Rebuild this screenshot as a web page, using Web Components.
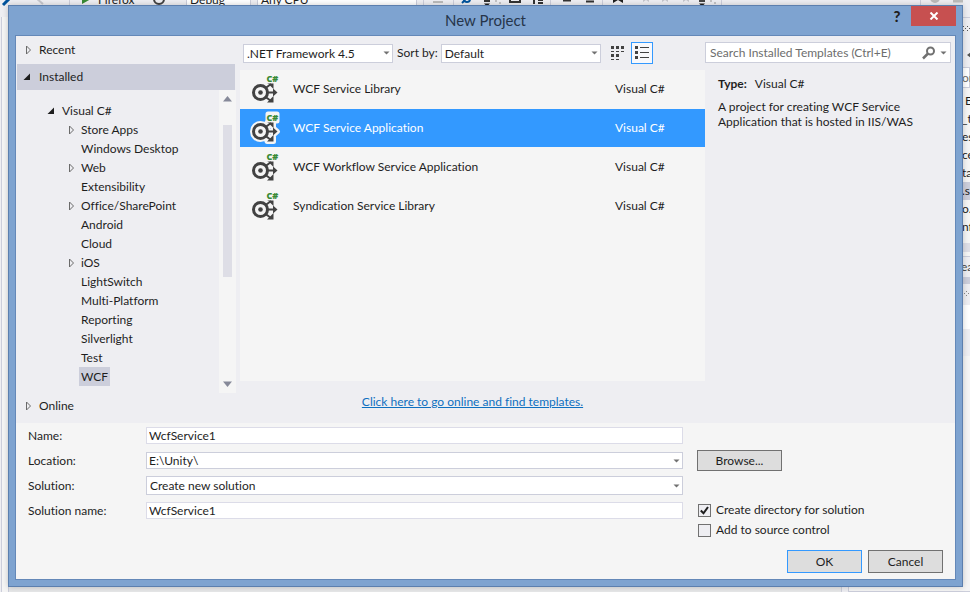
<!DOCTYPE html>
<html lang="en">
<head>
<meta charset="utf-8">
<title>New Project</title>
<style>
  html, body { height: 100%; margin: 0; }
  body {
    font: 12px/16px Lato, "Open Sans", "Noto Sans", sans-serif;
    font-variant-ligatures: none;
    color: #1e1e1e;
    background: #eeeef2;
    overflow: hidden;
  }
</style>
</head>
<body>
<app-desktop>
  <ide-shell></ide-shell>
  <project-dialog slot="dialog" heading="New Project">
    <category-nav slot="nav"></category-nav>
    <template-browser slot="browser"></template-browser>
    <template-info slot="info" kind="Visual C#">A project for creating WCF Service Application that is hosted in IIS/WAS</template-info>
    <project-form slot="form"></project-form>
  </project-dialog>
</app-desktop>

<script>
class Base extends HTMLElement {
  connectedCallback() {
    if (this.shadowRoot) return;
    const t = document.createElement('template');
    t.innerHTML = '<style>*{box-sizing:border-box}:host{box-sizing:border-box}button,input,select{font:inherit;color:inherit;margin:0}</style>' + this.view();
    this.attachShadow({ mode: 'open' }).append(t.content.cloneNode(true));
  }
  attr(name, fallback = '') { return this.getAttribute(name) ?? fallback; }
}
const define = (name, cls) => customElements.define(name, cls);

define('app-desktop', class extends Base {
  view() {
    return `<style>
      :host { display: block; position: relative; height: 100vh; overflow: hidden; }
      ::slotted([slot=dialog]) { position: absolute; inset: 5px 7px 5px 8px; }
    </style><slot></slot><slot name="dialog"></slot>`;
  }
});

/* The main window behind the dialog: toolbar, document edge, side panel. */
define('ide-shell', class extends Base {
  view() {
    return `<style>
      :host { display: grid; grid-template: 17px 1fr / 1fr 128px; height: 100%; background: #eeeef2; overflow: hidden; }
      .bar { grid-column: 1 / -1; display: flex; align-items: flex-start; overflow: hidden; }
      .bar svg { width: 970px; height: 17px; flex: none; }
      .doc { margin-left: 1px; border-left: 1px solid #ccceDB; border-right: 1px solid #ccceDB; background: #e6e7e8; }
      .doc div { width: 7px; height: 100%; background: #f5f5f5; border-right: 1px solid #ccceDB; }
      .side { margin-left: 6px; border: 1px solid #ccceDB; border-right: 0; background: #f5f5f5; display: flex; flex-direction: column; overflow: hidden; white-space: nowrap; }
      .side > * { flex: none; padding-left: 112px; }
      .side .head { height: 49px; background: #eeeef2; padding-left: 113px; }
      .search { height: 21px; background: #fff; border: 1px solid #ccceDB; color: #6d6d6d; line-height: 19px; }
      ul { list-style: none; margin: 4px 0 7px; line-height: 18px; }
      li { padding-left: 1px; }
      li.on { background: #ccceDB; margin-left: -112px; padding-left: 113px; }
      .scroll { height: 9px; background: #dedee6; }
      .tab { height: 28px; margin-top: 4px; border-top: 1px solid #ccceDB; line-height: 20px; color: #444; border-bottom: 7px solid #ccceDB; background: #eeeef2; }
      .grip { height: 21px; background: #eeeef2; }
      .white { height: 24px; background: #fff; }
      .gray { height: 27px; background: #eeeef2; }
      .rest { flex: 1; }
    </style>
    <div class="bar"><svg viewBox="0 0 970 17" font-size="12" fill="#1e1e1e">
      <path d="M3 5L11-3" stroke="#00539c" stroke-width="3"/><path d="M36-2l7 6" stroke="#c5c6cc" stroke-width="2"/>
      <path d="M69.500 0V5M416.500 0V5M423.500 0V5M453.500 0V5M550.500 0V5M602.500 0V5M721.500 0V5M920.500 0V5" stroke="#ccceDB"/>
      <path d="M82 4V-6l9 5z" fill="#388a34"/>
      <text x="98" y="4">Firefox</text>
      <circle cx="159" cy="-1" r="5" fill="none" stroke="#424242" stroke-width="2"/>
      <path d="M186.500-4H250.500V5M186.500 0V5M257.500 0V5M257 -4H416V5" stroke="#ccceDB" fill="none"/>
      <path d="M187 0h63v5h-63zM258 0h158v5H258z" fill="#fff"/>
      <text x="190" y="4">Debug</text><text x="261" y="4">Any CPU</text>
      <path d="M433 2h10M436-1h8" stroke="#bbb" stroke-width="2"/>
      <path d="M462 3l3-3" stroke="#00539c" stroke-width="2"/><circle cx="467" cy="-1" r="3" fill="none" stroke="#00539c" stroke-width="2"/>
      <path d="M484 1h6M510-3v5h10v-5M534 0v4M538 0h5M538 3h5M563 .500h8M586 1.500h8" stroke="#333" stroke-width="2" fill="none"/>
      <path d="M484 3.500h6l-3 3z"/><path d="M495 1h2M499 3h2M710 1h2M714 3h2" stroke="#999"/>
      <path d="M613-3h10v6l-5-3-5 3z"/><path d="M643 2l3-2 3 2v-5h-6zM662 2l3-2 3 2v-5h-6zM683 2l3-2 3 2v-5h-6z" fill="#c5c6cc"/>
      <path d="M699 1h6" stroke="#444" stroke-width="2"/><path d="M699 3.500h6l-3 3z"/>
      <circle cx="935" cy="-2" r="5" fill="#bbb"/><path d="M953 1h10" stroke="#bbb" stroke-width="3"/>
    </svg></div>
    <div class="doc"><div></div></div>
    <div class="side">
      <div class="head"><svg width="9" height="48" viewBox="0 0 9 48" fill="#555"><path d="M1 8h1v1H1zM5 8h1v1H5zM3 10h1v1H3zM7 10h1v1H7zM1 12h1v1H1zM5 12h1v1H5zM9 34v6l-4-3z"/></svg></div>
      <div class="search">or</div>
      <ul><li>&nbsp;E</li><li>_t</li><li>es</li><li>ce</li><li>ta</li><li class="on">.s</li><li>o.</li><li>nf</li></ul>
      <div class="scroll"></div>
      <div class="tab">ea</div>
      <div class="grip"><svg width="9" height="20" viewBox="0 0 9 20" fill="#888"><path d="M1 7h1v1H1zM5 7h1v1H5zM3 9h1v1H3zM7 9h1v1H7zM1 11h1v1H1zM5 11h1v1H5z"/></svg></div>
      <div class="white"></div><div class="gray"></div><div class="rest"></div>
    </div>`;
  }
});

define('project-dialog', class extends Base {
  view() {
    return `<style>
      :host { display: grid; grid-template-rows: 29px 1fr; padding: 0 6px 6px; background: #7ea3d0; border: 1px solid #5c7fae; box-shadow: 0 0 6px #0003; }
      header { display: grid; grid-template-columns: 1fr auto 1fr; align-items: start; }
      h1 { grid-column: 2; margin: 0; font-size: 15px; font-weight: 400; line-height: 28px; color: #26354a; }
      .tools { display: flex; justify-content: flex-end; gap: 7px; }
      button { border: 0; padding: 0; display: grid; place-items: center; height: 20px; }
      .help { width: 14px; background: none; font-weight: 900; font-size: 15px; color: #1e1e1e; }
      .close { width: 45px; background: #c75050; }
      main { display: flex; flex-direction: column; border: 1px solid #6488b8; background: #eeeef2; min-height: 0; }
      .top { flex: 1; display: grid; grid-template-columns: 224px 1fr 250px; min-height: 0; }
    </style>
    <header><h1>${this.attr('heading')}</h1>
      <div class="tools"><button class="help" aria-label="Help">?</button>
      <button class="close" aria-label="Close"><svg width="10" height="8" viewBox="0 0 10 8"><path d="M1.500.500l7 7M8.500.500l-7 7" stroke="#fff" stroke-width="2"/></svg></button></div>
    </header>
    <main><div class="top"><slot name="nav"></slot><slot name="browser"></slot><slot name="info"></slot></div><slot name="form"></slot></main>`;
  }
});

define('expand-mark', class extends Base {
  view() {
    const shape = this.hasAttribute('open')
      ? '<path d="M7 1.500V8H.500z" fill="#1e1e1e"/>'
      : '<path d="M2.500 1v8L6.500 5z" fill="none" stroke="#6a6a6a"/>';
    return `<style>:host{display:block;width:8px;height:10px}svg{display:block}</style><svg width="8" height="10" viewBox="0 0 8 10">${shape}</svg>`;
  }
});

define('tree-node', class extends Base {
  view() {
    const m = this.attr('mark');
    const mark = m ? `<expand-mark ${m === 'open' ? 'open' : ''}></expand-mark>` : '<span></span>';
    return `<style>
      :host { display: block; padding-left: 51px; }
      :host([root]) { padding-left: 31px; }
      button { display: grid; grid-template-columns: 8px auto; column-gap: 4px; align-items: center; border: 0; background: none; padding: 0; height: 19px; text-align: left; }
      :host([root]) button { column-gap: 5px; }
      .t { padding: 0 2px; line-height: 19px; }
      :host([selected]) .t { background: #ccceDB; }
    </style><button>${mark}<span class="t"><slot></slot></span></button>`;
  }
});

define('category-nav', class extends Base {
  view() {
    const kids = [['Store Apps', 1], ['Windows Desktop'], ['Web', 1], ['Extensibility'], ['Office/SharePoint', 1], ['Android'], ['Cloud'], ['iOS', 1], ['LightSwitch'], ['Multi-Platform'], ['Reporting'], ['Silverlight'], ['Test']];
    return `<style>
      :host { display: flex; flex-direction: column; min-height: 0; padding: 1px 4px 4px 0; }
      .group { display: grid; grid-template-columns: 8px 1fr; column-gap: 7px; align-items: center; height: 26px; flex: none; border: 0; background: none; padding: 0 0 0 8px; text-align: left; }
      .on { background: #ccceDB; margin: 1px 1px 0 1px; padding-left: 6px; column-gap: 8px; }
      .tree { flex: 1; display: flex; min-height: 0; }
      .nodes { flex: 1; padding-top: 11px; overflow: hidden; }
      .track { width: 17px; background: #f5f5f5; display: grid; grid-template-rows: 35px 152fr 116fr; justify-items: center; }
      .thumb { width: 9px; background: #dedee6; }
      .track svg { align-self: start; margin-top: 6px; }
      .track svg:last-child { align-self: end; margin: 0 0 6px; }
    </style>
    <button class="group"><expand-mark></expand-mark>Recent</button>
    <button class="group on"><expand-mark open></expand-mark>Installed</button>
    <div class="tree"><div class="nodes">
      <tree-node root mark="open">Visual C#</tree-node>
      ${kids.map(([n, m]) => `<tree-node ${m ? 'mark="closed"' : ''}>${n}</tree-node>`).join('')}
      <tree-node selected>WCF</tree-node>
    </div>
    <div class="track"><svg width="9" height="6" viewBox="0 0 9 6"><path d="M0 5.500L4.500 0 9 5.500z" fill="#868999"/></svg><div class="thumb"></div><svg width="9" height="6" viewBox="0 0 9 6"><path d="M0 .500L4.500 6 9 .500z" fill="#868999"/></svg></div></div>
    <button class="group"><expand-mark></expand-mark>Online</button>`;
  }
});

/* A labelled drop-down; the arrow shares the grid cell of the select. */
define('drop-down', class extends Base {
  view() {
    const l = this.attr('label'), hide = this.hasAttribute('bare');
    return `<style>
      :host { display: flex; align-items: center; gap: 3px; }
      .box { flex: 1; display: grid; align-items: center; }
      select, svg { grid-area: 1 / 1; }
      select { appearance: none; width: 100%; height: 19px; border: 1px solid #ccceDB; border-radius: 0; background: #fff; padding: 0 18px 0 3px; line-height: 15px; }
      svg { justify-self: end; margin-right: 3px; pointer-events: none; }
    </style>${hide ? '' : `<label for="s">${l}</label>`}<span class="box"><select id="s" ${hide ? `aria-label="${l}"` : ''}><option>${this.attr('value')}</option></select>
    <svg width="7" height="4" viewBox="0 0 7 4"><path d="M.500 .500h6L3.500 3.500z" fill="#717171"/></svg></span>`;
  }
});

define('wcf-icon', class extends Base {
  view() {
    const art = `<circle cx="12.500" cy="20.500" r="7" fill="none"/><circle class="f" cx="12.500" cy="20.500" r="2.300"/>
      <path d="M17 16.500L23 12M17 24.500L23 29M18 20.500h9" fill="none"/>
      <path class="f" d="M19 11.500h6.500V17L24 15.500 20.500 12zM19 30.500h6.500V24L24 25.500 20.500 29zM25 16.500l4.500 4-4.500 4z"/>`;
    return `<style>
      :host, svg { display: block; }
      g { stroke: #424242; stroke-width: 3; } .f { fill: #424242; stroke: none; } path:not(.f) { stroke-width: 2; }
      text { font: 800 9px "Open Sans", sans-serif; fill: #388a34; }
      .halo { display: none; }
      :host([halo]) .halo { display: inline; stroke: #f5f5f5; stroke-width: 7; stroke-linejoin: round; }
      :host([halo]) .halo * { stroke: #f5f5f5; fill: #f5f5f5; stroke-width: 5; }
    </style><svg width="32" height="34" viewBox="0 0 32 34" overflow="visible">
      <g class="halo"><circle cx="12.500" cy="20.500" r="8"/>${art}<rect x="20" y="3" width="9" height="7"/></g>
      <g>${art}</g><text x="18.500" y="10">C#</text></svg>`;
  }
});

define('template-row', class extends Base {
  view() {
    return `<style>
      :host { display: block; }
      button { width: 100%; height: 39px; border: 0; border-bottom: 1px solid #f5f5f5; background: none; padding: 0 0 0 8px; display: grid; grid-template-columns: 32px 1fr 90px; column-gap: 13px; align-items: center; text-align: left; }
      :host([selected]) button { background: #3399ff; background-clip: padding-box; color: #fff; }
    </style><button><wcf-icon ${this.hasAttribute('selected') ? 'halo' : ''}></wcf-icon><span><slot></slot></span><span>${this.attr('lang')}</span></button>`;
  }
});

define('template-browser', class extends Base {
  view() {
    return `<style>
      :host { display: flex; flex-direction: column; min-width: 0; }
      .bar { display: flex; align-items: center; height: 34px; padding: 0 0 0 3px; flex: none; }
      .fw { width: 150px; margin-right: 4px; } .sort { flex: 1; margin-right: 6px; }
      .bar button { width: 22px; height: 22px; padding: 0; border: 1px solid transparent; background: none; display: grid; place-items: center; }
      .bar .on { border-color: #3399ff; background: #f8f8fb; margin: 0 52px 0 2px; }
      .list { flex: 1; background: #f5f5f5; min-height: 0; }
      .more { height: 42px; display: grid; place-items: center; flex: none; }
      a { color: #0e70c0; }
    </style>
    <div class="bar">
      <drop-down class="fw" bare label="Framework" value=".NET Framework 4.5"></drop-down>
      <drop-down class="sort" label="Sort by:" value="Default"></drop-down>
      <button aria-label="Medium icons"><svg width="14" height="14" viewBox="0 0 14 14" fill="#424242"><path d="M0 0h3v3H0zM5 0h3v3H5zM10 0h3v3h-3zM0 5h3v1H0zM5 5h3v1H5zM10 5h3v1h-3zM0 8h3v3H0zM5 8h3v3H5zM0 13h3v1H0zM5 13h3v1H5z"/></svg></button>
      <button class="on" aria-label="Small icons"><svg width="14" height="14" viewBox="0 0 14 14" fill="#424242"><path d="M0 0h3v3H0zM0 5h3v3H0zM0 10h3v3H0zM5 1h9v1H5zM5 6h9v1H5zM5 11h9v1H5z"/></svg></button>
    </div>
    <div class="list">
      <template-row lang="Visual C#">WCF Service Library</template-row>
      <template-row lang="Visual C#" selected>WCF Service Application</template-row>
      <template-row lang="Visual C#">WCF Workflow Service Application</template-row>
      <template-row lang="Visual C#">Syndication Service Library</template-row>
    </div>
    <div class="more"><a href="#templates">Click here to go online and find templates.</a></div>`;
  }
});

define('template-info', class extends Base {
  view() {
    return `<style>
      :host { display: block; padding: 6px 4px 0 0; }
      .search { display: flex; align-items: center; height: 21px; border: 1px solid #ccceDB; background: #fff; }
      input { flex: 1; min-width: 0; border: 0; padding: 0 4px; background: none; appearance: none; height: 19px; }
      input::placeholder { color: #6d6d6d; opacity: 1; }
      button { border: 0; background: none; padding: 0; display: flex; align-items: center; gap: 4px; margin-right: 3px; }
      dl { display: flex; gap: 8px; margin: 13px 0 7px 13px; }
      dt { font-weight: 700; } dd { margin: 0; }
      p { margin: 0 30px 0 13px; line-height: 15px; }
    </style>
    <div class="search"><input type="search" aria-label="Search Installed Templates" placeholder="Search Installed Templates (Ctrl+E)">
    <button aria-label="Search options"><svg width="14" height="14" viewBox="0 0 14 14" fill="none" stroke="#717171"><circle cx="8.500" cy="5" r="3.500" stroke-width="2"/><path d="M6 7.500L1 12.500" stroke-width="2.500"/></svg><svg width="7" height="4" viewBox="0 0 7 4"><path d="M.500 .500h6L3.500 3.500z" fill="#717171"/></svg></button></div>
    <dl><dt>Type:</dt><dd>${this.attr('kind')}</dd></dl><p><slot></slot></p>`;
  }
});

define('form-field', class extends Base {
  view() {
    const v = this.attr('value');
    const control = this.hasAttribute('list')
      ? `<span class="box"><select id="c"><option>${v}</option></select><svg width="7" height="4" viewBox="0 0 7 4"><path d="M.500 .500h6L3.500 3.500z" fill="#717171"/></svg></span>`
      : `<span class="box"><input id="c" type="text" value="${v}"></span>`;
    return `<style>
      :host { display: grid; grid-template-columns: 118px 1fr; align-items: center; height: 25px; }
      .box { display: grid; align-items: center; }
      select, input, svg { grid-area: 1 / 1; }
      select, input { appearance: none; width: 100%; height: 17px; border: 1px solid #dcdce8; border-radius: 0; background: #fff; padding: 0 2px; line-height: 15px; }
      select { border-color: #ccceDB; }
      :host([tall]) select { height: 19px; padding: 0 3px; }
      svg { justify-self: end; margin-right: 3px; pointer-events: none; }
    </style><label for="c">${this.attr('label')}</label>${control}`;
  }
});

define('check-option', class extends Base {
  view() {
    return `<style>
      :host { display: block; height: 20px; padding-left: 1px; }
      label { display: inline-flex; align-items: center; gap: 5px; height: 20px; }
      .box { display: grid; place-items: center; }
      input, svg { grid-area: 1 / 1; }
      input { appearance: none; width: 13px; height: 13px; border: 1px solid #717171; background: #eeeef2; }
      svg { visibility: hidden; pointer-events: none; }
      input:checked + svg { visibility: visible; }
    </style><label><span class="box"><input type="checkbox" ${this.hasAttribute('checked') ? 'checked' : ''}><svg width="9" height="9" viewBox="0 0 9 9"><path d="M.800 4.500L3.500 7.300 8 1" fill="none" stroke="#1e1e1e" stroke-width="2"/></svg></span><slot></slot></label>`;
  }
});

define('push-button', class extends Base {
  view() {
    return `<style>
      :host { display: block; width: 75px; height: 23px; }
      button { width: 100%; height: 100%; padding: 0; border: 1px solid var(--edge, #717171); background: #dddddd; }
    </style><button><slot></slot></button>`;
  }
});

define('project-form', class extends Base {
  view() {
    return `<style>
      :host { display: block; background: #f5f5f5; padding: 0 12px 6px; }
      .cols { display: grid; grid-template-columns: 1fr 246px; column-gap: 14px; }
      .side { padding-top: 27px; }
      .browse { width: 85px; height: 21px; margin-bottom: 29px; }
      footer { display: flex; justify-content: flex-end; gap: 6px; margin-top: 10px; }
      .primary { --edge: #3399ff; }
    </style>
    <div class="cols"><div>
      <form-field label="Name:" value="WcfService1"></form-field>
      <form-field label="Location:" value="E:\\Unity\\" list></form-field>
      <form-field label="Solution:" value="Create new solution" list tall></form-field>
      <form-field label="Solution name:" value="WcfService1"></form-field>
    </div><div class="side">
      <push-button class="browse">Browse...</push-button>
      <check-option checked>Create directory for solution</check-option>
      <check-option>Add to source control</check-option>
    </div></div>
    <footer><push-button class="primary">OK</push-button><push-button>Cancel</push-button></footer>`;
  }
});
</script>
</body>
</html>
